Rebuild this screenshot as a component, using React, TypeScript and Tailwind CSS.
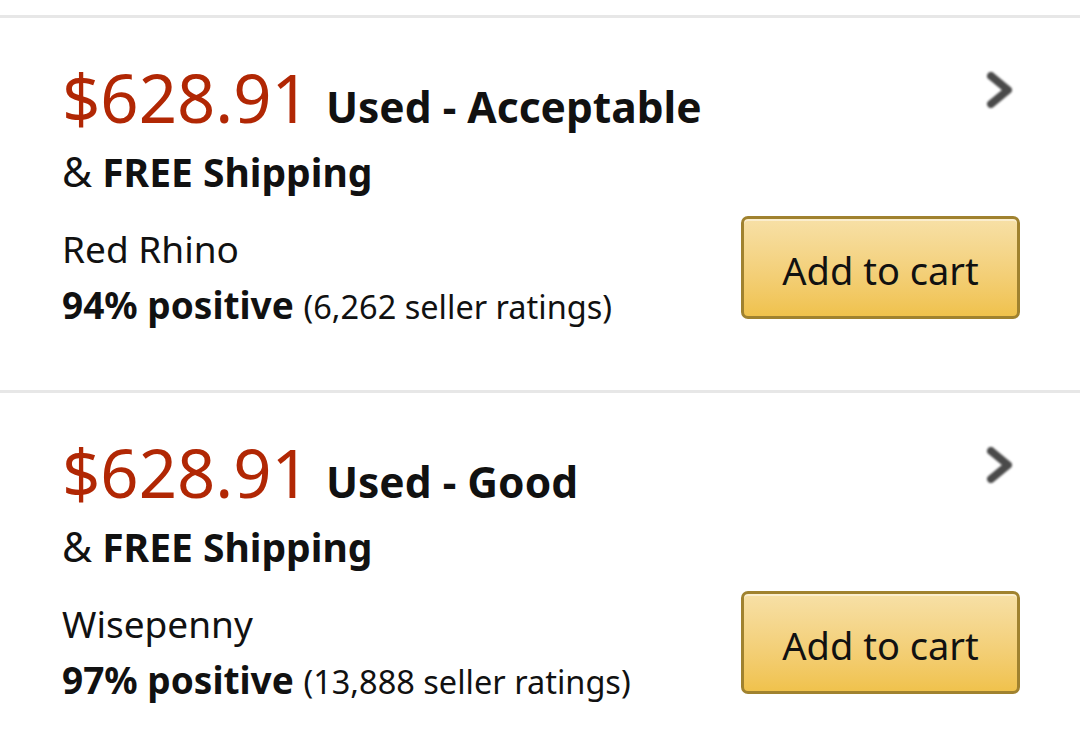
const offers = [
  {
    price: "$628.91",
    condition: "Used - Acceptable",
    seller: "Red Rhino",
    positive: "94% positive",
    ratings: "(6,262 seller ratings)",
  },
  {
    price: "$628.91",
    condition: "Used - Good",
    seller: "Wisepenny",
    positive: "97% positive",
    ratings: "(13,888 seller ratings)",
  },
];

const Chevron = () => (
  <svg width="30" height="40" viewBox="0 0 30 40" className="blur-[0.8px]">
    <polyline
      points="6,6 23,20 6,34"
      fill="none"
      stroke="#4a4a4a"
      strokeWidth="8"
      strokeLinecap="round"
      strokeLinejoin="round"
    />
  </svg>
);

const OfferRow = ({ offer }: { offer: (typeof offers)[number] }) => (
  <div className="flex justify-between h-[375px] pl-[62px] pr-[60px] pt-[39px] border-b-[3px] border-[#e7e7e7]">
    {/* Left: price, shipping, seller */}
    <div className="flex flex-col text-[#111]">
      <div className="leading-[80px] text-[67px] whitespace-nowrap">
        <span className="text-[#b12704]">{offer.price}</span>
        <span className="ml-[16px] text-[42.5px] font-bold leading-none">
          {offer.condition}
        </span>
      </div>
      <div className="text-[39px] leading-[68px]">
        <span className="text-[41px]">&amp;</span>{" "}
        <span className="font-bold">FREE Shipping</span>
      </div>
      <div className="mt-[15px] text-[37px] leading-[56px]">{offer.seller}</div>
      <div className="text-[37px] leading-[56px] whitespace-nowrap">
        <span className="font-bold">{offer.positive}</span>{" "}
        <span className="text-[32.5px]">{offer.ratings}</span>
      </div>
    </div>

    {/* Right: chevron + button */}
    <div className="flex flex-col items-end">
      <div className="mt-[13px] mr-[5px]">
        <Chevron />
      </div>
      <button className="mt-[106px] w-[279px] h-[103px] pt-[5px] rounded-[7px] border-[3px] border-[#a0822f] bg-gradient-to-b from-[#f7e0a6] to-[#f0c24c] shadow-[inset_0_2px_0_rgba(255,255,255,0.45)] text-[38px] text-[#111]">
        Add to cart
      </button>
    </div>
  </div>
);

export default function App() {
  return (
    <div
      className="w-[1080px] h-[744px] overflow-hidden bg-white"
      style={{ fontFamily: '"Noto Sans", Roboto, sans-serif' }}
    >
      <div className="h-[15px]" />
      <div className="border-t-[3px] border-[#e7e7e7]">
        {offers.map((o, i) => (
          <OfferRow key={i} offer={o} />
        ))}
      </div>
    </div>
  );
}
